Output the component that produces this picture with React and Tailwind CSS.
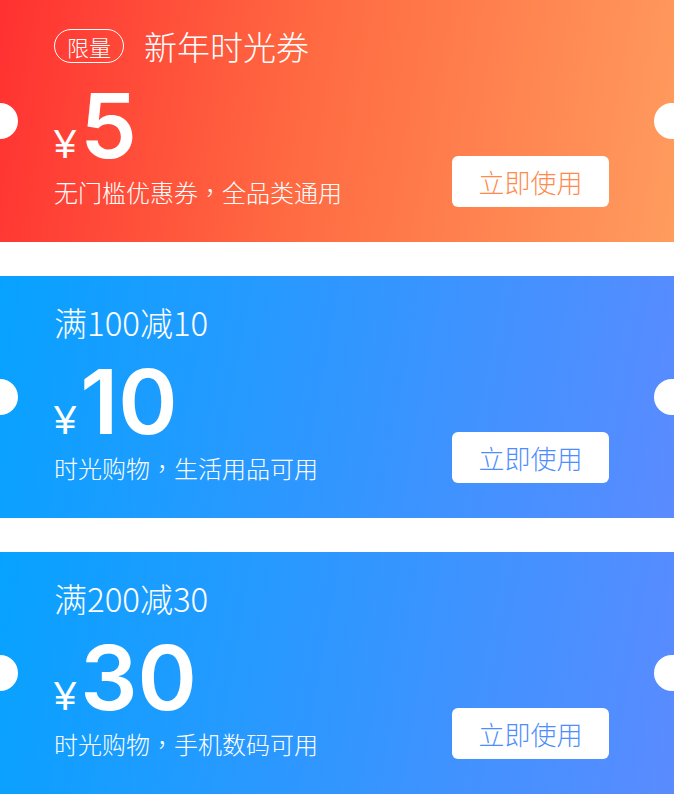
import React from "react";

const cjk = { fontFamily: '"Noto Sans CJK SC", "Noto Sans", sans-serif' };
const tc = { fontFamily: '"Noto Sans CJK TC", "Noto Sans CJK SC", sans-serif' };
const num = { fontFamily: 'Inter, "Liberation Sans", Arial, sans-serif' };
const yen = { fontFamily: '"Liberation Sans", Arial, sans-serif' };

function Desc({ text }) {
  const [a, b] = text.split("，");
  return (
    <>
      {a}
      <span style={tc}>，</span>
      {b}
    </>
  );
}

function Coupon({ gradient, badge, title, amount, desc, btnColor }) {
  return (
    <div className={`relative h-[242px] w-full overflow-hidden ${gradient}`}>
      <div className="absolute left-[-18px] top-[103px] h-[36px] w-[36px] rounded-full bg-white" />
      <div className="absolute left-[654px] top-[103px] h-[36px] w-[36px] rounded-full bg-white" />
      <div className="flex h-full justify-between pl-[54px] pr-[65px]">
        <div className="flex flex-col pt-[29px] text-white" style={cjk}>
          <div className="flex h-[34px] items-center">
            {badge && (
              <span className="mr-[20px] flex h-[34px] items-center rounded-full border-[1.5px] border-white px-[12px] text-[22px] font-light leading-none">
                {badge}
              </span>
            )}
            <span className="text-[33px] font-light leading-none">{title}</span>
          </div>
          <div className="mt-[18px] flex h-[86px] items-baseline">
            <span className="text-[40px] font-light leading-none" style={yen}>¥</span>
            <span className="ml-[4px] text-[90px] font-semibold leading-none" style={num}>{amount}</span>
          </div>
          <div className="mt-[13px] text-[24px] font-light leading-none">
            <Desc text={desc} />
          </div>
        </div>
        <div className="flex flex-col justify-end pb-[35px]">
          <button
            className={`flex h-[51px] w-[157px] items-center justify-center rounded-[6px] bg-white text-[26px] font-light leading-none ${btnColor}`}
            style={cjk}
          >
            立即使用
          </button>
        </div>
      </div>
    </div>
  );
}

export default function App() {
  return (
    <div className="flex w-[674px] flex-col gap-[34px] bg-white">
      <Coupon
        gradient="bg-[linear-gradient(100deg,#ff3131_0%,#ff6a42_45%,#ff9c5e_100%)]"
        badge="限量"
        title="新年时光券"
        amount="5"
        desc="无门槛优惠券，全品类通用"
        btnColor="text-[#ff8a4c]"
      />
      <Coupon
        gradient="bg-[linear-gradient(100deg,#07a2ff_0%,#5a8bff_100%)]"
        title="满100减10"
        amount="10"
        desc="时光购物，生活用品可用"
        btnColor="text-[#4d8dff]"
      />
      <Coupon
        gradient="bg-[linear-gradient(100deg,#07a2ff_0%,#5a8bff_100%)]"
        title="满200减30"
        amount="30"
        desc="时光购物，手机数码可用"
        btnColor="text-[#4d8dff]"
      />
    </div>
  );
}
